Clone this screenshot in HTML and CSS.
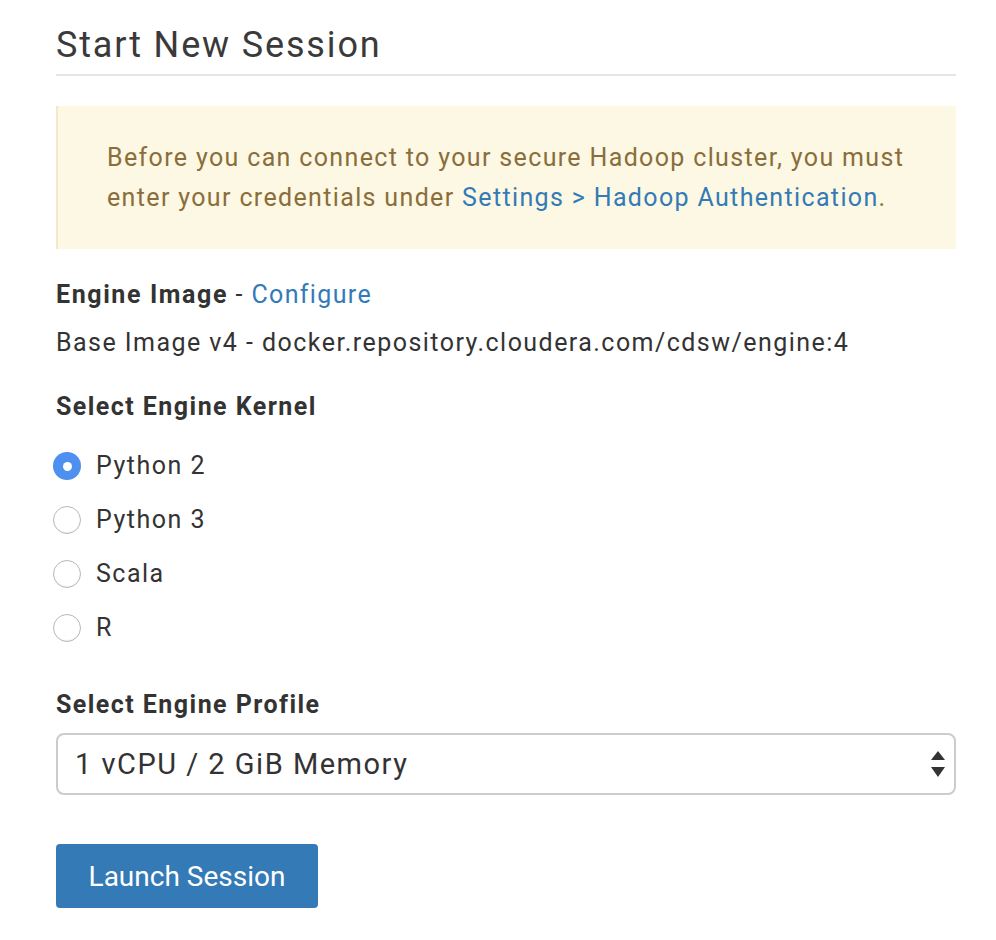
FILE: index.html
```html
<!DOCTYPE html>
<html>
<head>
<meta charset="utf-8">
<link rel="stylesheet" href="styles.css">
</head>
<body>
<div class="page">
  <h1 class="title">Start New Session</h1>
  <div class="alert">Before you can connect to your secure Hadoop cluster, you must enter your credentials under <a class="link" href="#">Settings &gt; Hadoop Authentication</a>.</div>
  <div class="engine-label"><strong>Engine Image</strong> - <a class="link" href="#">Configure</a></div>
  <div class="engine-value">Base Image v4 - docker.repository.cloudera.com/cdsw/engine:4</div>
  <div class="section-label kernel-label">Select Engine Kernel</div>
  <div class="radios">
    <label class="radio-row"><span class="radio checked"></span><span class="radio-text">Python 2</span></label>
    <label class="radio-row"><span class="radio"></span><span class="radio-text">Python 3</span></label>
    <label class="radio-row"><span class="radio"></span><span class="radio-text">Scala</span></label>
    <label class="radio-row"><span class="radio"></span><span class="radio-text">R</span></label>
  </div>
  <div class="section-label profile-label">Select Engine Profile</div>
  <div class="select">
    <span class="select-text">1 vCPU / 2 GiB Memory</span>
    <svg class="select-arrows" width="14" height="26" viewBox="0 0 14 26"><path d="M7 0 L14 9 L0 9 Z" fill="#333"/><path d="M0 16 L14 16 L7 26 Z" fill="#333"/></svg>
  </div>
  <button class="btn">Launch Session</button>
</div>
</body>
</html>
```

FILE: styles.css
```css
* { box-sizing: border-box; }
html, body { margin: 0; padding: 0; background: #fff; }
body {
  font-family: Roboto, "Liberation Sans", Arial, sans-serif;
  color: #333;
  font-size: 25px;
  line-height: 40px;
  letter-spacing: 1.35px;
}
.page {
  width: 900px;
  margin-left: 56px;
  padding-top: 25px;
}
.title {
  margin: 0;
  font-weight: 400;
  font-size: 36px;
  letter-spacing: 1.85px;
  line-height: 40px;
  color: #3a3a3a;
  padding-bottom: 9px;
  border-bottom: 2px solid #e6e6e6;
}
.alert {
  margin-top: 30px;
  background: #fcf8e3;
  border-left: 2px solid #f6e7c7;
  color: #8a6d3b;
  padding: 32px 36px 31px 49px;
  line-height: 40px;
}
.link { color: #337ab7; text-decoration: none; }
.engine-label { margin-top: 26px; }
.engine-label strong { font-weight: 700; letter-spacing: 1.6px; }
.engine-value { margin-top: 8px; letter-spacing: 1.45px; }
.section-label { font-weight: 700; letter-spacing: 1.45px; }
.kernel-label { margin-top: 24px; }
.radios { margin-top: 12px; display: flex; flex-direction: column; }
.radio-row {
  display: flex;
  align-items: center;
  height: 54px;
}
.radio {
  width: 28px;
  height: 28px;
  border-radius: 50%;
  margin-left: -3px;
  margin-right: 15px;
  border: 1px solid #b8b8b8;
  background: #fff;
  box-shadow: inset 0 -1px 1px rgba(0,0,0,0.06);
  flex: none;
  display: flex;
  align-items: center;
  justify-content: center;
}
.radio.checked {
  border: none;
  background: #4d90f0;
  box-shadow: none;
}
.radio.checked::after {
  content: "";
  width: 9px;
  height: 9px;
  border-radius: 50%;
  background: #fff;
}
.radio-text { font-size: 25px; letter-spacing: 1.5px; }
.profile-label { margin-top: 30px; }
.select {
  margin-top: 8px;
  height: 62px;
  border: 2px solid #ccc;
  border-radius: 8px;
  display: flex;
  align-items: center;
  justify-content: space-between;
  padding: 0 9px 0 17px;
}
.select-text { font-size: 29px; letter-spacing: 1.5px; color: #333; }
.select-arrows { display: block; }
.btn {
  margin-top: 49px;
  display: block;
  height: 64px;
  width: 262px;
  background: #337ab7;
  color: #fff;
  border: none;
  border-radius: 4px;
  font-family: Roboto, "Liberation Sans", Arial, sans-serif;
  font-size: 28px;
  letter-spacing: 0;
  padding: 0;
}
```
